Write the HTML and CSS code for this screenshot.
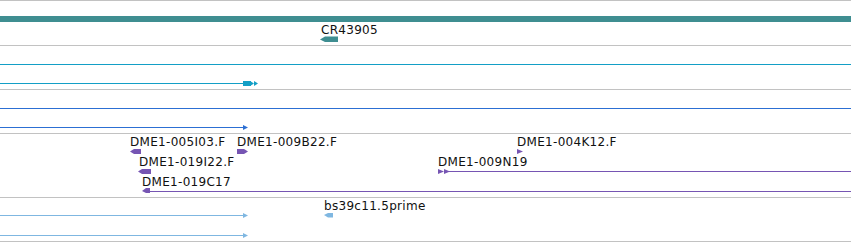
FILE: index.html
```html
<!DOCTYPE html>
<html lang="en">
<head>
  <meta charset="UTF-8" />
  <title>Track view</title>
  <link rel="stylesheet" href="styles.css">
</head>
<body>
  <div class="tracks">

    <!-- gene track -->
    <div class="track track-short">
      <svg class="canvas" width="851" height="44">
        <rect class="teal" x="0" y="15" width="851" height="6" />
        <polygon class="teal" points="320,38.5 325,35.5 338,35.5 338,41 325,41" />
      </svg>
      <span class="label" style="left: 321px; top: 22px;">CR43905</span>
    </div>

    <!-- cyan track -->
    <div class="track track-short">
      <svg class="canvas" width="851" height="43">
        <rect class="cyan" x="0" y="18" width="851" height="1" />
        <rect class="cyan" x="0" y="37" width="244" height="1" />
        <rect class="cyan" x="243" y="35" width="8" height="5" />
        <polygon class="cyan" points="250,35 254,37.5 250,40" />
        <polygon class="cyan" points="254,35 258,37.5 254,40" />
      </svg>
    </div>

    <!-- blue track -->
    <div class="track track-short">
      <svg class="canvas" width="851" height="43">
        <rect class="blue" x="0" y="18" width="851" height="1" />
        <rect class="blue" x="0" y="37" width="244" height="1" />
        <polygon class="blue" points="243,35 248,37.5 243,40" />
      </svg>
    </div>

    <!-- clone track -->
    <div class="track track-tall">
      <svg class="canvas" width="851" height="63">
        <polygon class="purple" points="130,17.5 134,15 141,15 141,20 134,20" />
        <polygon class="purple" points="237,15 244,15 248,17.5 244,20 237,20" />
        <polygon class="purple" points="517,15 523,17.5 517,20" />
        <polygon class="purple" points="138,37.5 142,35 151,35 151,40 142,40" />
        <polygon class="purple" points="438,35 444,37.5 438,40" />
        <polygon class="purple" points="444,35 450,37.5 444,40" />
        <rect class="purple" x="446" y="37" width="405" height="1" />
        <polygon class="purple" points="142,57 146,54 150,54 150,59 146,59" />
        <rect class="purple" x="146" y="57" width="705" height="1" />
      </svg>
      <span class="label" style="left: 130px; top: 1px;">DME1-005I03.F</span>
      <span class="label" style="left: 237px; top: 1px;">DME1-009B22.F</span>
      <span class="label" style="left: 517px; top: 1px;">DME1-004K12.F</span>
      <span class="label" style="left: 139px; top: 21px;">DME1-019I22.F</span>
      <span class="label" style="left: 438px; top: 21px;">DME1-009N19</span>
      <span class="label" style="left: 142px; top: 41px;">DME1-019C17</span>
    </div>

    <!-- est track -->
    <div class="track track-short">
      <svg class="canvas" width="851" height="43">
        <polygon class="light" points="324,17 328,15 333,15 333,19.5 328,19.5" />
        <rect class="light" x="0" y="17" width="244" height="1" />
        <polygon class="light" points="243,15 248,17.5 243,20" />
        <rect class="light" x="0" y="37" width="244" height="1" />
        <polygon class="light" points="243,35 248,37.5 243,40" />
      </svg>
      <span class="label" style="left: 324px; top: 1px;">bs39c11.5prime</span>
    </div>

  </div>
</body>
</html>
```

FILE: styles.css
```css
* {
  margin: 0;
  padding: 0;
  box-sizing: border-box;
}

body {
  font-family: 'DejaVu Sans', sans-serif;
  background: #fff;
  color: #111;
}

.tracks {
  width: 851px;
  border-top: 1px solid #c2c2c2;
}

.track {
  position: relative;
  border-bottom: 1px solid #c2c2c2;
}

.track-short {
  height: 44px;
}

.tracks .track:first-child {
  height: 45px;
}

.track-tall {
  height: 64px;
}

.canvas {
  display: block;
}

.label {
  position: absolute;
  font-size: 12px;
  line-height: 14px;
  letter-spacing: 0.3px;
  white-space: nowrap;
}

.teal { fill: #3f8e91; }
.cyan { fill: #139fc6; }
.blue { fill: #2c6fd3; }
.purple { fill: #7655b3; }
.light { fill: #7fb7e1; }
```
